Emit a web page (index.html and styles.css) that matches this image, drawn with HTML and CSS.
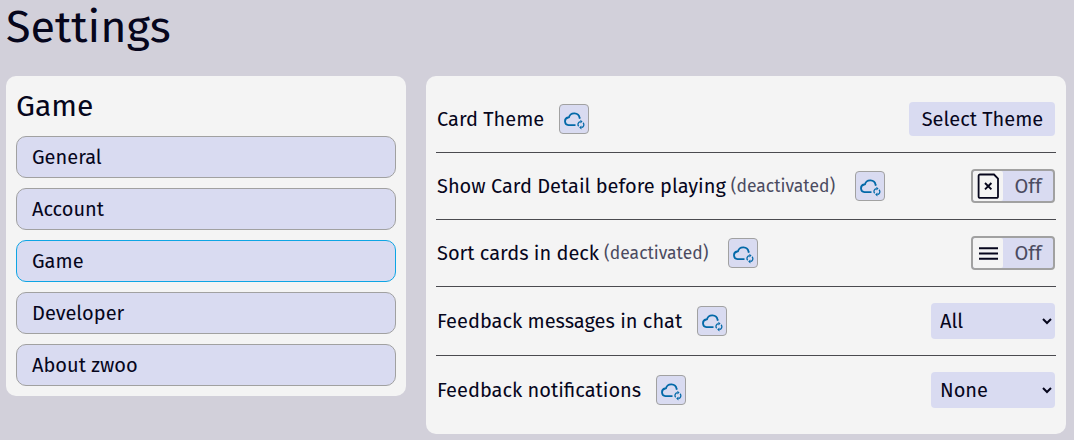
FILE: index.html
```html
<!DOCTYPE html>
<html lang="en">
<head>
<meta charset="utf-8">
<title>Settings</title>
<link rel="stylesheet" href="styles.css">
</head>
<body>
<svg class="defs" aria-hidden="true">
  <symbol id="cloud-sync" viewBox="0 0 24 24">
    <path d="M13.500 18.200H6.500a3.900 3.900 0 0 1-.4-7.700l.9-.2a5.400 5.200 0 0 1 10.600.5l.2 1" fill="none" stroke="currentColor" stroke-width="1.800"/>
    <path d="M18.400 14.600a2.800 2.800 0 0 0-1.700 4.700M19.400 20.500a2.800 2.800 0 0 0 1.700-4.700" fill="none" stroke="currentColor" stroke-width="1.300"/>
    <path d="M18.400 12.700v3.800l2.200-1.900zM19.400 18.600v3.800l-2.200-1.900z" fill="currentColor"/>
  </symbol>
</svg>
<h1 class="title">Settings</h1>
<main class="layout">
  <nav class="panel menu">
    <h2 class="menu-title">Game</h2>
    <a class="item">General</a>
    <a class="item">Account</a>
    <a class="item active">Game</a>
    <a class="item">Developer</a>
    <a class="item">About zwoo</a>
  </nav>
  <section class="panel options">
    <div class="row">
      <span class="label">Card Theme</span>
      <button class="sync"><svg><use href="#cloud-sync"/></svg></button>
      <button class="select-theme">Select Theme</button>
    </div>
    <div class="row">
      <span class="label">Show Card Detail before playing</span><span class="state">(deactivated)</span>
      <button class="sync after-state"><svg><use href="#cloud-sync"/></svg></button>
      <button class="toggle"><span class="knob"><svg viewBox="0 0 26 30"><path d="M3 3.500h14l4 4v18a1.400 1.400 0 0 1-1.400 1.400H3a1.400 1.400 0 0 1-1.400-1.400V4.900A1.400 1.400 0 0 1 3 3.500z" fill="none" stroke="currentColor" stroke-width="1.800"/><path d="M8 12l6.400 6.400M14.400 12L8 18.400" fill="none" stroke="currentColor" stroke-width="1.900"/></svg></span><span class="off">Off</span></button>
    </div>
    <div class="row">
      <span class="label">Sort cards in deck</span><span class="state">(deactivated)</span>
      <button class="sync after-state"><svg><use href="#cloud-sync"/></svg></button>
      <button class="toggle"><span class="knob"><svg viewBox="0 0 26 30"><path d="M2 10.300h19M2 15.500h19M2 20.700h19" fill="none" stroke="currentColor" stroke-width="2"/></svg></span><span class="off">Off</span></button>
    </div>
    <div class="row">
      <span class="label">Feedback messages in chat</span>
      <button class="sync"><svg><use href="#cloud-sync"/></svg></button>
      <select class="choice"><option>All</option></select>
    </div>
    <div class="row">
      <span class="label">Feedback notifications</span>
      <button class="sync"><svg><use href="#cloud-sync"/></svg></button>
      <select class="choice"><option>None</option></select>
    </div>
  </section>
</main>
</body>
</html>
```
FILE: styles.css
```css
* { box-sizing: border-box; }
body {
  margin: 0;
  height: 440px;
  overflow: hidden;
  background: #d2d0da;
  color: #06061c;
  font: 20px/28px "Fira Sans", "Noto Sans", sans-serif;
}
button, select { font: inherit; color: inherit; margin: 0; padding: 0; border: 0; }
.defs { display: none; }
.title {
  margin: 0;
  height: 76px;
  padding-left: 6px;
  font-size: 45px;
  line-height: 54px;
  font-weight: 400;
}
.layout { display: flex; align-items: flex-start; gap: 20px; padding: 0 8px 0 6px; }
.panel { background: #f4f4f4; border-radius: 10px; padding: 10px; }
.menu { width: 400px; display: flex; flex-direction: column; gap: 10px; }
.menu-title { margin: 0; height: 40px; line-height: 40px; font-size: 30px; font-weight: 400; }
.item {
  height: 42px;
  padding: 0 15px;
  border: 1px solid #a1a1a1;
  border-radius: 10px;
  background: #d9dbf1;
  line-height: 40px;
}
.item.active { border-color: #0ea5e4; }
.options { width: 640px; }
.row { display: flex; align-items: center; height: 67px; padding: 0 1px; border-bottom: 1px solid #4a4a4f; }
.row:nth-child(4) { height: 69px; }
.row:last-child { height: 68px; border-bottom: 0; }
.label, .state { white-space: nowrap; flex: none; }
.state { margin-left: 5px; padding-top: 1px; font-size: 17.5px; color: #4b4b60; }
.sync {
  width: 30px;
  height: 30px;
  margin: 0 auto 0 15px;
  flex: none;
  display: grid;
  place-items: center;
  border: 1px solid #a1a1a1;
  border-radius: 4px;
  background: #d9dbf1;
  color: #0369a8;
}
.sync.after-state { margin-left: 20px; }
.sync svg { width: 24px; height: 24px; }
.select-theme { width: 146px; height: 34px; padding-left: 1px; border-radius: 4px; background: #d9dbf1; }
.toggle {
  width: 84px;
  height: 34px;
  display: flex;
  border: 2px solid #a1a1a1;
  border-radius: 4px;
  background: #d9dbf1;
  overflow: hidden;
}
.knob { width: 30px; height: 30px; padding-left: 4px; background: #f4f4f4; border-radius: 2px; }
.knob svg { width: 26px; height: 30px; display: block; }
.off { flex: 1; line-height: 30px; text-align: center; color: #4b4b60; }
.choice { width: 124px; height: 36px; padding: 0 0 0 5px; border-radius: 4px; background: #d9dbf1; }
```
